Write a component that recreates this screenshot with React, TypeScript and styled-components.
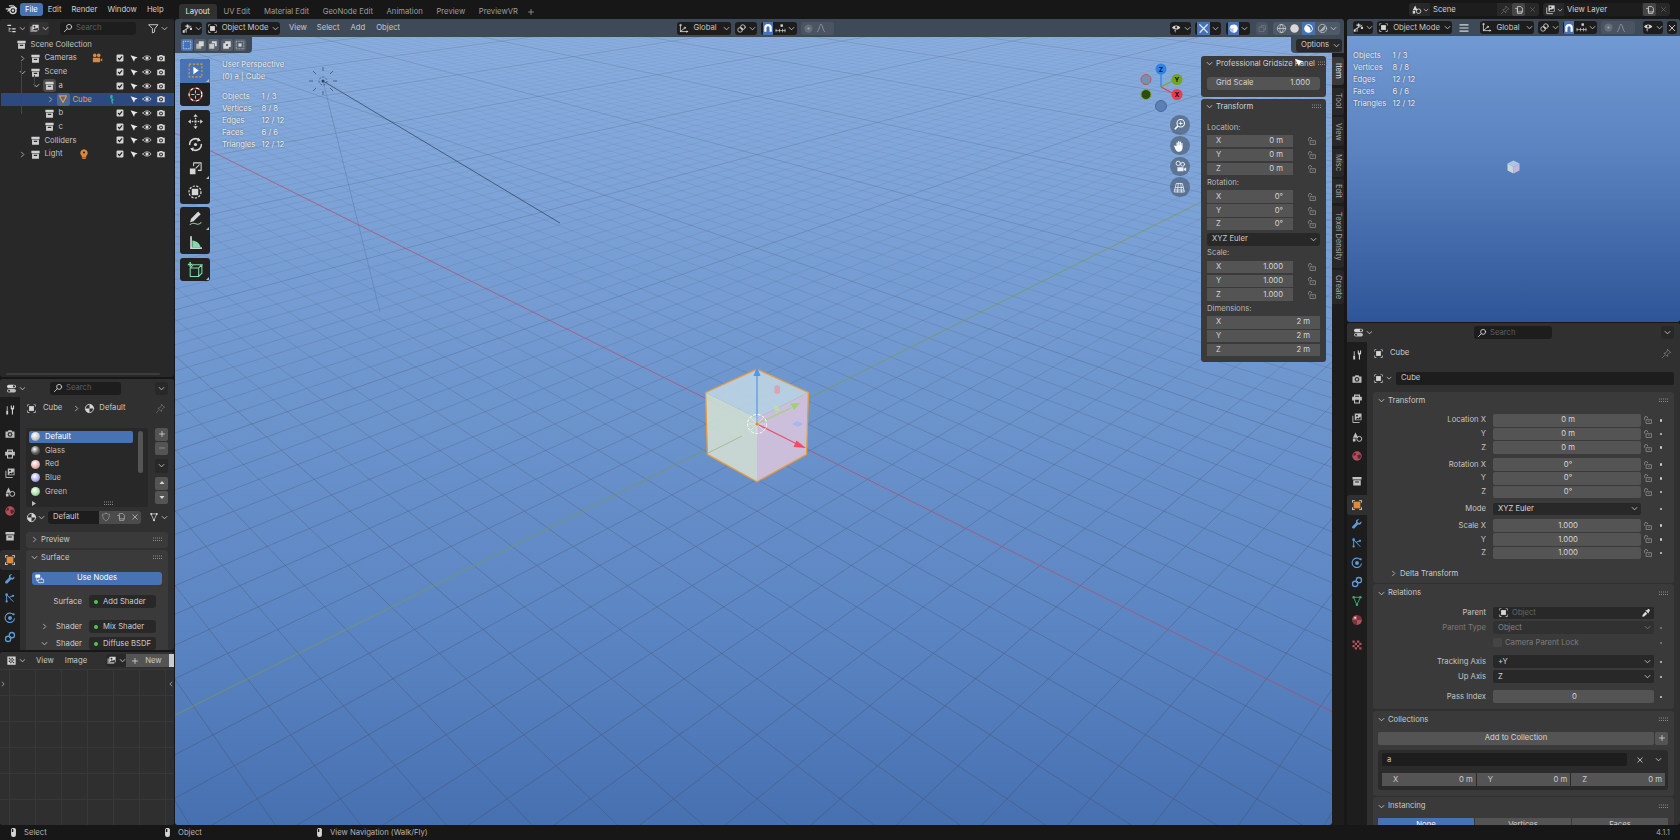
import React, { useMemo } from 'react';
import styled, { createGlobalStyle } from 'styled-components';

const GlobalStyle = createGlobalStyle`
  html, body { margin: 0; padding: 0; background: #181818; }
  body {
    font-family: Inter, "Liberation Sans", sans-serif;
    font-size: 7.7px;
    line-height: 1;
    color: #cccccc;
    -webkit-font-smoothing: antialiased;
  }
  * { box-sizing: border-box; }
`;

/* ---------- icons ---------- */

const line = (children: React.ReactNode, w = 1.2) => (
  <g fill="none" stroke="currentColor" strokeWidth={w} strokeLinecap="round" strokeLinejoin="round">
    {children}
  </g>
);

const glyphs: Record<string, React.ReactNode> = {
  logo: (
    <>
      {line(<circle cx="9.8" cy="9.3" r="3.8" />, 1.7)}
      <circle cx="9.8" cy="9.3" r="1.5" />
      {line(<path d="M1.5 7.2h4.5M3.5 10l3.5-3.2M5.5 3.5h5l3.6 3.2" />, 1.5)}
    </>
  ),
  box: <path fillRule="evenodd" d="M2 2.5h12V6H2zM3 7h10v7H3zM5.5 8.5V10h5V8.5z" />,
  check: (
    <>
      <rect x="2.5" y="2.5" width="11" height="11" rx="1.6" />
      <path d="M5 8l2.2 2.4L11.3 5.4" fill="none" stroke="#222" strokeWidth="1.9" />
    </>
  ),
  arrow: <path d="M2.5 3.5L14 7.2 9.6 9.2 8 14z" />,
  eye: (
    <>
      {line(<path d="M1.5 8c2.8-4.6 10.2-4.6 13 0-2.8 4.6-10.2 4.6-13 0z" />)}
      <circle cx="8" cy="8" r="2.5" />
    </>
  ),
  render: (
    <>
      <path d="M2 4.5h3L6 3h4l1 1.5h3V13H2z" />
      <circle cx="8" cy="8.6" r="3.2" fill="#333" />
      <circle cx="8" cy="8.6" r="1.5" />
    </>
  ),
  camera: (
    <>
      <circle cx="5" cy="4.5" r="2.4" />
      <circle cx="10.3" cy="4.5" r="2.4" />
      <path d="M2.5 7.5h9.5v6H2.5zM12.5 10l2.5-1.6v4.2L12.5 11z" />
    </>
  ),
  bulb: (
    <>
      <path d="M8 1.5a5 5 0 0 1 3 9v2H5v-2a5 5 0 0 1 3-9z" />
      <rect x="5.6" y="13" width="4.8" height="1.5" />
      <circle cx="8" cy="6" r="1.4" fill="#332211" />
    </>
  ),
  mesh: <>{line(<path d="M2.5 3h11L8 13.5z" />, 2)}</>,
  pose: <path d="M5 2l3 1.5L6.8 7 9 8.2 7.5 11l1 3-1.5.4L5.5 11l.5-3.5L4 6.8z" />,
  object: (
    <>
      <path d="M2 2h3v1H3v2H2zM11 2h3v3h-1V3h-2zM2 11h1v2h2v1H2zM13 11h1v3h-3v-1h2z" />
      <rect x="4.5" y="4.5" width="7" height="7" />
    </>
  ),
  material: (
    <>
      {line(<circle cx="8" cy="8" r="6" />, 1.3)}
      <path d="M8 2a6 6 0 0 1 6 6H8zM8 8H2a6 6 0 0 0 6 6z" />
    </>
  ),
  pin: line(<path d="M9.5 2l4.5 4.5-2 .8-2.6 2.6-.2 2.6-5-5 2.6-.2L9.3 4zM5 11l-3 3" />, 1),
  search: line(<><circle cx="9.8" cy="6.2" r="4" /><path d="M6.8 9.2L2.2 13.8" /></>, 1.4),
  filter: line(<path d="M1.5 2.5h13L9.6 8.6V13l-3.2 1.4V8.6z" />, 1.3),
  outliner: <path d="M2 2.5h5.5v2H2zM4 6.5h1v5h3v1H4zM5 8h3v1H5zM9 7.7h5v1.6H9zM9 11.7h5v1.6H9z" />,
  display: (
    <>
      <rect x="2" y="5" width="10" height="8" opacity=".55" />
      <path d="M5 2.5h9v8H5z" />
      <circle cx="8" cy="5.5" r="1.4" fill="#333" />
      <path d="M6 9.5l2.5-2 1.5 1 2-1.5 1 1v2H6z" fill="#333" />
    </>
  ),
  editor: (
    <>
      <rect x="1.5" y="2.5" width="13" height="5" rx="2.5" />
      <rect x="1.5" y="8.8" width="13" height="5" rx="2.5" opacity=".85" />
      <circle cx="11.5" cy="5" r="1.6" fill="#333" />
      <circle cx="4.5" cy="11.3" r="1.6" fill="#333" />
    </>
  ),
  view3d: (
    <>
      {line(<path d="M6 9v4.5M6 9L2 11.5M6 9l7-4" />, 1.2)}
      <path d="M5 3.5h2V2h2v1.5h2v2H9V7H7V5.5H5zM11.5 7h3v3h-3zM1 11h3v3H1z" />
    </>
  ),
  imageEd: (
    <path d="M2 2h12v12H2zM4 4v2h2V4zM8 4v2h2V4zM6 6v2h2V6zM10 6v2h2V6zM4 8v2h2V8zM8 8v2h2V8zM6 10v2h2v-2zM10 10v2h2v-2z" fillRule="evenodd" />
  ),
  menu: <path d="M2 3h12v1.6H2zM2 7.2h12v1.6H2zM2 11.4h12V13H2z" />,
  global: line(<><path d="M3.5 12.5h9M3.5 12.5V3.5M3.5 12.5L9.5 7.5" /><circle cx="3.5" cy="3" r="1" /><circle cx="13" cy="12.5" r="1" /><circle cx="10" cy="7" r="1" /></>),
  link: line(<><circle cx="6" cy="10" r="3.4" /><circle cx="10" cy="6" r="3.4" /><circle cx="8" cy="8" r=".8" /></>, 1.2),
  magnet: <path d="M2 7.5a6 6 0 0 1 12 0V14h-3.5V7.5a2.5 2.5 0 0 0-5 0V14H2z" />,
  snapInc: (
    <>
      {line(<path d="M1.5 11h13M1.5 9v4M6.5 9v4M11 9v4M14.5 9v4" />, 1)}
      <rect x="8" y="2" width="3.5" height="3.5" />
    </>
  ),
  prop: (
    <>
      <circle cx="8" cy="8" r="6" opacity=".3" />
      <circle cx="8" cy="8" r="1.6" />
    </>
  ),
  curve: line(<path d="M2 14C5 14 5.5 2 8 2s3 12 6 12" />, 1.1),
  viewEye: (
    <>
      <path d="M1.5 6.5C4 2.5 11 2.5 13.5 6.5 11 10.5 4 10.5 1.5 6.5z" />
      <circle cx="7.5" cy="6.5" r="1.6" fill="#222" />
      <path d="M5 10h2l-1 4.5z" />
    </>
  ),
  gizmoOv: line(<path d="M2.5 2.5L8 8m5.5-5.5L8 8M8 8l-5 5.5M8 8l5.5 5.5" />, 1.8),
  overlay: (
    <>
      <circle cx="8" cy="8" r="6" opacity=".6" />
      <path d="M8 2a6 6 0 0 1 0 12z" />
      <circle cx="6" cy="5.5" r="2.6" />
    </>
  ),
  xray: line(<><rect x="2.5" y="5.5" width="8" height="8" /><path d="M5.5 5.5V2.5h8v8h-3" /></>, 1),
  shadeWire: line(<><circle cx="8" cy="8" r="6" /><path d="M2 8h12M8 2c-3.5 3-3.5 9 0 12M8 2c3.5 3 3.5 9 0 12" /></>, 1),
  shadeSolid: <circle cx="8" cy="8" r="6.2" />,
  shadeMat: (
    <>
      <circle cx="8" cy="8" r="6.2" />
      <path d="M5 4a5 5 0 0 1 5.5 8.5A6 6 0 0 0 5 4z" fill="#4772b3" />
    </>
  ),
  shadeRender: (
    <>
      {line(<circle cx="8" cy="8" r="6" />, 1)}
      <path d="M11.5 3.5A6 6 0 0 1 3.5 11.5z" opacity=".7" />
    </>
  ),
  selSet: (
    <g fill="none" stroke="currentColor" strokeWidth="1.1" strokeDasharray="1.6 1.1">
      <rect x="2" y="2" width="12" height="12" />
    </g>
  ),
  selExt: (
    <>
      <path d="M6 2h8v8H6z" />
      <path d="M2 6h8v8H2z" opacity=".75" />
    </>
  ),
  selSub: (
    <>
      <path d="M2 6h8v8H2z" opacity=".9" />
      <path d="M6 2h8v8h-3V5H6z" />
    </>
  ),
  selDiff: <path fillRule="evenodd" d="M5 2h9v9h-3v3H2V5h3zM6.5 6.5v3h3v-3z" />,
  selInt: (
    <>
      <g fill="none" stroke="currentColor" strokeWidth="1" strokeDasharray="1.5 1">
        <rect x="2" y="2" width="12" height="12" />
      </g>
      <rect x="5.5" y="5.5" width="5" height="5" />
    </>
  ),
  toolSelect: (
    <>
      <rect x="2" y="2" width="12" height="12" fill="none" stroke="#e0a03c" strokeWidth="1" strokeDasharray="2 1.5" />
      <path d="M6 4.5l5 3.5-5 3.5z" fill="#fff" />
    </>
  ),
  toolCursor: (
    <>
      <circle cx="8" cy="8" r="6" fill="none" stroke="#fff" strokeWidth="1.2" strokeDasharray="3 2.6" />
      <circle cx="8" cy="8" r="6" fill="none" stroke="#d23c3c" strokeWidth="1.2" strokeDasharray="3 2.6" strokeDashoffset="2.8" />
      <path d="M8 4v3M8 9v3M4 8h3M9 8h3" stroke="#ddd" strokeWidth=".8" />
    </>
  ),
  toolMove: (
    <>
      <path d="M8 1l2 2.6H6zM8 15l-2-2.6h4zM1 8l2.6-2v4zM15 8l-2.6 2V6z" />
      <rect x="7" y="7" width="2" height="2" />
      <rect x="7.4" y="4.5" width="1.2" height="1.4" />
      <rect x="7.4" y="10.1" width="1.2" height="1.4" />
      <rect x="4.5" y="7.4" width="1.4" height="1.2" />
      <rect x="10.1" y="7.4" width="1.4" height="1.2" />
    </>
  ),
  toolRotate: (
    <>
      {line(<path d="M2.5 8a5.5 5.5 0 0 1 9-4.2M13.5 8a5.5 5.5 0 0 1-9 4.2" />, 1.4)}
      <circle cx="8" cy="8" r="1.5" />
      <path d="M10.5 1.5l2.5 3-3.5.6zM5.5 14.5l-2.5-3 3.5-.6z" />
    </>
  ),
  toolScale: (
    <>
      <path d="M2 8h6v6H2z" />
      {line(<path d="M6 2h8v8M6 2v3M14 10h-3M8.5 7.5L12 4" />, 1.1)}
    </>
  ),
  toolXform: (
    <>
      <circle cx="8" cy="8" r="6" fill="none" stroke="currentColor" strokeWidth="1.2" strokeDasharray="2.2 1.4" />
      <rect x="4.8" y="4.8" width="6.4" height="6.4" />
    </>
  ),
  toolAnnotate: (
    <>
      <path d="M10.5 1.5l2.4 2.4-6.8 6.6-3.2 1 .9-3.3z" />
      <path d="M2.5 14c3-2.5 4.5-1.5 6.5-.8s3.5-.4 4.5-1.6" fill="none" stroke="#6fcb9f" strokeWidth="1" />
    </>
  ),
  toolMeasure: (
    <>
      <path d="M3 2h1.6v10.5H14V14H3z" />
      <path d="M5 6c4 .3 7 2.8 7.8 6.5H5z" fill="#7fdca8" />
    </>
  ),
  toolAdd: (
    <g fill="none" stroke="#7fdca8" strokeWidth="1">
      <path d="M3 6.5h8v8H3zM3 6.5l3-3h8l-3 3M14 3.5v8l-3 3" />
      <path d="M3 1v4.4M.8 3.2h4.4" strokeWidth="1.4" />
    </g>
  ),
  zoom: (
    <>
      <circle cx="9.5" cy="6.5" r="4.6" fill="none" stroke="currentColor" strokeWidth="1.3" />
      <path d="M6 10l-3.8 3.8" stroke="currentColor" strokeWidth="2" />
      <path d="M9 4h1v2h2v1h-2v2H9V7H7V6h2z" />
    </>
  ),
  hand: (
    <path d="M4 8V4.5c0-1 1.4-1 1.4 0V7h.4V3c0-1 1.5-1 1.5 0v4h.4V3.5c0-1 1.4-1 1.4 0V7.5h.4V5c0-1 1.4-1 1.4 0v5c0 3-2 4.5-4 4.5-2.5 0-3-1-4.4-3.5L1.5 8.5c-.5-1 .7-1.6 1.3-.8z" />
  ),
  navCam: (
    <>
      {line(<><circle cx="6" cy="5" r="2.5" /><circle cx="11" cy="6" r="2.2" /></>, 1.1)}
      <path d="M5 9.5h7V14H5zM12.5 11l2.5-1.5V14l-2.5-1.3z" />
    </>
  ),
  navGrid: line(<path d="M4.5 3h7l2.5 10.500H2zM3.3 8h9.4M2.5 11h11M6.5 3L5.500 13.500M9.500 3l1 10.500" />, 1),
  lock: line(<><path d="M2.5 7V4.8a2.5 2.5 0 0 1 5 0" /><rect x="5.5" y="7.5" width="8" height="6" /><path d="M9 10h1" /></>, .9),
  shield: line(<path d="M8 2c2 1.2 3.5 1.5 5.5 1.5 0 5-1.5 8.5-5.5 11-4-2.5-5.500-6-5.500-11C4.500 3.500 6 3.200 8 2z" />, 1.2),
  copy: line(<><path d="M2.5 5.5h3v8h7v-3" /><path d="M6 2.5h5l2.5 2.5v6H6z" /></>, 1.2),
  cross: line(<path d="M3.5 3.5l9 9M12.5 3.5l-9 9" />, 1.6),
  plus: line(<path d="M8 3v10M3 8h10" />, 1.6),
  minus: line(<path d="M3 8h10" />, 1.6),
  up: <path d="M8 4l5 6H3z" />,
  down: <path d="M8 12L3 6h10z" />,
  dataEd: (
    <>
      {line(<path d="M4 3h8.5L8 13z" />, 1.2)}
      <circle cx="3.5" cy="3" r="1.6" />
      <circle cx="12.5" cy="3" r="1.6" />
      <circle cx="8" cy="13" r="1.6" />
    </>
  ),
  nodes: (
    <>
      <rect x="2" y="2" width="7" height="5" rx="1" />
      <rect x="6" y="9" width="8" height="5" rx="1" fill="none" stroke="currentColor" />
      {line(<path d="M11 7v2M4 7v4h2" />, 1)}
    </>
  ),
  tool: (
    <>
      <path d="M3 8.5h2.5V14H3zM3.7 3h1.1v5H3.7z" />
      <path d="M9 2v3.5c0 1 .7 1.8 1.5 2V14H12V7.5c.8-.2 1.5-1 1.5-2V2H12v3h-1.5V2z" />
    </>
  ),
  output: <path fillRule="evenodd" d="M4 2h8v3h2.5v5H12v4H4v-4H1.5V5H4zM5.5 3.5V5h5V3.5zM5.5 9v3.5h5V9z" />,
  viewLayer: (
    <>
      <path d="M5 2h9v9H5z" />
      <path d="M2.5 5v9h9" fill="none" stroke="currentColor" strokeWidth="1.2" />
      <circle cx="8" cy="5" r="1.2" fill="#1d1d1d" />
      <path d="M6 10l2.5-2.500 1.500 1 2.500-2.500.5 4z" fill="#1d1d1d" />
    </>
  ),
  scene: (
    <>
      <path d="M6 2l3.5 7H2.5z" />
      <circle cx="11" cy="10.5" r="3.3" fill="none" stroke="currentColor" strokeWidth="1.3" />
      <path d="M6 10H2.5v4H6z" />
    </>
  ),
  world: (
    <>
      <circle cx="8" cy="8" r="6.3" />
      <path d="M4 3.5l3 1-1 2.5-3 .5zM8.5 6.5l4-.5 1 3-2.5 3-2-1z" fill="#1d1d1d" opacity=".7" />
    </>
  ),
  objTab: (
    <>
      <path d="M1.5 1.5H5v1H2.5V5h-1zM11 1.5h3.5V5h-1V2.5H11zM1.5 11h1v2.500H5v1H1.500zM13.500 11h1v3.500H11v-1h2.500z" fill="#e8e8e8" />
      <rect x="3.5" y="3.5" width="9" height="9" />
    </>
  ),
  modifier: (
    <path d="M13.5 4.5l-2.4 2.2-2-.6-.6-2L11 1.8C9.2 1 7 2 6.6 4c-.2.8 0 1.500.2 2.100L2 10.900c-.8.8-.8 1.900 0 2.700.8.8 2 .7 2.700 0l4.700-4.800c2.200.8 4.400-.7 4.600-3 0-.5 0-.9-.5-1.300z" />
  ),
  particles: (
    <>
      <circle cx="3.5" cy="3.5" r="1.8" />
      <circle cx="12" cy="5" r="1.5" />
      <circle cx="3.5" cy="12.5" r="1.5" />
      {line(<path d="M3.5 3.5L12 12.5M3.5 3.5v9M7 7l5-2" />, 1.3)}
    </>
  ),
  physics: (
    <>
      {line(<path d="M12.5 3.5A6.3 6.3 0 1 0 14 9" />, 1.5)}
      <circle cx="8" cy="8" r="2.6" />
      <circle cx="13" cy="3" r="1.3" />
    </>
  ),
  constraint: (
    <>
      {line(<><circle cx="5.5" cy="10.5" r="3.5" /><circle cx="10.5" cy="5.5" r="3.5" /></>, 1.7)}
      <circle cx="8" cy="8" r="1.3" />
    </>
  ),
  matTab: (
    <>
      <circle cx="8" cy="8" r="6.5" />
      <path d="M8 1.5A6.5 6.5 0 0 1 14.5 8H8zM8 8H1.5A6.5 6.5 0 0 0 8 14.5z" fill="#1d1d1d" opacity=".45" />
      <circle cx="5.5" cy="5" r="1.5" fill="#f1c6c6" />
    </>
  ),
  texture: (
    <path fillRule="evenodd" d="M2 2h12v12H2zM5 2v3H2v3h3v3H2v3h3v-3h3v3h3v-3h3V8h-3V5h3V2h-3v3H8V2zM5 5v3h3V5zM8 8v3h3V8z" />
  ),
  mouse: (
    <path fillRule="evenodd" d="M4.5 3.5a3 3 0 0 1 3-2h1a3 3 0 0 1 3 2v8a3 3 0 0 1-3 3h-1a3 3 0 0 1-3-3zM5.7 3.7v3.5h2V2.8c-1.2 0-2 .1-2 .9z" />
  ),
  eyedrop: (
    <>
      <path d="M10.5 2.5c1-1 2-1 3 0s1 2 0 3L12 6.700l1 1-1.200 1.200-4.800-4.800L8.300 3l1 1z" />
      <path d="M7 6L2.5 11 2 14l3-.5L10 9z" fill="#ddd" />
    </>
  ),
};

const Svg = styled.svg<{ $c?: string }>`
  flex-shrink: 0;
  display: block;
  fill: currentColor;
  color: ${(p) => p.$c || '#d6d6d6'};
`;

const Icon = ({ name, size = 11, color }: { name: string; size?: number; color?: string }) => (
  <Svg $c={color} width={size} height={size} viewBox="0 0 16 16">
    {glyphs[name]}
  </Svg>
);

const ChevD = ({ size = 7, color = '#c8c8c8' }: { size?: number; color?: string }) => (
  <Svg $c={color} width={size} height={size} viewBox="0 0 8 8">
    <path d="M1 2.5L4 5.5 7 2.5" fill="none" stroke="currentColor" strokeWidth="1" />
  </Svg>
);

const ChevR = ({ size = 7, color = '#b8b8b8' }: { size?: number; color?: string }) => (
  <Svg $c={color} width={size} height={size} viewBox="0 0 8 8">
    <path d="M2.5 1L5.5 4 2.5 7" fill="none" stroke="currentColor" strokeWidth="1" />
  </Svg>
);

const Grip = () => (
  <Svg $c="#8a8a8a" width="9" height="5" viewBox="0 0 9 5">
    {[0, 2, 4, 6, 8].map((x) => (
      <g key={x}>
        <rect x={x} y="0.5" width="1" height="1" />
        <rect x={x} y="3" width="1" height="1" />
      </g>
    ))}
  </Svg>
);

/* ---------- page frame ---------- */

const Screen = styled.div`
  width: 1680px;
  height: 840px;
  overflow: hidden;
  display: flex;
  flex-direction: column;
  background: #171717;
`;

const TopBar = styled.div`
  height: 19px;
  flex-shrink: 0;
  display: flex;
  align-items: center;
  padding-left: 5px;
  color: #d4d4d4;
`;

const MenuItem = styled.div<{ $active?: boolean; $ml?: number }>`
  height: 13px;
  margin-left: ${(p) => p.$ml || 0}px;
  padding: 0 5px;
  display: flex;
  align-items: center;
  border-radius: 3px;
  background: ${(p) => (p.$active ? '#4772b3' : 'transparent')};
  color: ${(p) => (p.$active ? '#fff' : '#cfcfcf')};
`;

const Tabs = styled.div`
  display: flex;
  align-self: flex-end;
  height: 15px;
  margin-left: 10px;
  align-items: stretch;
`;

const WsTab = styled.div<{ $active?: boolean }>`
  padding: 0 6.8px;
  display: flex;
  align-items: center;
  border-radius: 3px 3px 0 0;
  background: ${(p) => (p.$active ? '#303030' : 'transparent')};
  color: ${(p) => (p.$active ? '#e4e4e4' : '#9d9d9d')};
`;

const AddTab = styled(WsTab)`
  padding: 0 2px;
`;

const TopRight = styled.div`
  margin-left: auto;
  margin-right: 10px;
  display: flex;
  gap: 4px;
`;

const SceneBox = styled.div<{ $w: number }>`
  width: ${(p) => p.$w}px;
  height: 13px;
  display: flex;
  align-items: center;
  border-radius: 3px;
  background: #282828;
  padding-left: 2px;
  gap: 1px;
`;

const SceneName = styled.div`
  flex: 1;
  padding-left: 3px;
  align-self: stretch;
  display: flex;
  align-items: center;
  background: #1d1d1d;
`;

const SceneBtn = styled.div<{ $lit?: boolean }>`
  width: 13px;
  height: 13px;
  display: flex;
  align-items: center;
  justify-content: center;
  background: ${(p) => (p.$lit ? '#454545' : 'transparent')};
  border-radius: 2px;
`;

const Main = styled.div`
  flex: 1;
  min-height: 0;
  display: flex;
`;

const LeftColumn = styled.div`
  width: 174px;
  margin-right: 1px;
  flex-shrink: 0;
  display: flex;
  flex-direction: column;
  gap: 2px;
`;

const RightColumn = styled.div`
  width: 333px;
  margin-left: 3px;
  flex-shrink: 0;
  display: flex;
  flex-direction: column;
  gap: 1px;
`;

const Region = styled.div<{ $h?: number; $bg?: string }>`
  height: ${(p) => (p.$h ? `${p.$h}px` : 'auto')};
  flex: ${(p) => (p.$h ? '0 0 auto' : '1')};
  min-height: 0;
  position: relative;
  overflow: hidden;
  border-radius: 3px;
  display: flex;
  flex-direction: column;
  background: ${(p) => p.$bg || '#282828'};
`;

const HeaderBar = styled.div<{ $bg?: string; $h?: number }>`
  height: ${(p) => p.$h || 18}px;
  flex-shrink: 0;
  display: flex;
  align-items: center;
  gap: 4px;
  padding: 0 6px;
  background: ${(p) => p.$bg || '#303030'};
`;

const Pill = styled.div<{ $w?: number; $bg?: string; $ml?: number }>`
  height: 13px;
  width: ${(p) => (p.$w ? `${p.$w}px` : 'auto')};
  margin-left: ${(p) => p.$ml || 0}px;
  flex-shrink: 0;
  display: flex;
  align-items: center;
  justify-content: center;
  gap: 2px;
  padding: 0 2px;
  border-radius: 3px;
  overflow: hidden;
  background: ${(p) => p.$bg || '#1d1d1d'};
`;

const PillSeg = styled.div<{ $lit?: boolean; $w?: number }>`
  align-self: stretch;
  width: ${(p) => (p.$w ? `${p.$w}px` : 'auto')};
  display: flex;
  align-items: center;
  justify-content: center;
  background: ${(p) => (p.$lit ? '#4772b3' : 'transparent')};
`;

const HeaderText = styled.div<{ $ml?: number }>`
  margin-left: ${(p) => p.$ml || 0}px;
  color: #c8c8c8;
  white-space: nowrap;
`;

const SearchBox = styled.div<{ $w: number; $ml?: number }>`
  width: ${(p) => p.$w}px;
  margin-left: ${(p) => p.$ml || 0}px;
  height: 13px;
  display: flex;
  align-items: center;
  gap: 3px;
  padding-left: 3px;
  border-radius: 3px;
  background: #1d1d1d;
  color: #5f5f5f;
`;

/* ---------- outliner ---------- */

const TreeList = styled.div`
  position: relative;
  flex: 1;
  padding-top: 0.8px;
`;

const TreeGuide = styled.div<{ $x: number; $top: number; $h: number }>`
  position: absolute;
  left: ${(p) => p.$x}px;
  top: ${(p) => p.$top}px;
  height: ${(p) => p.$h}px;
  width: 1px;
  background: #444;
`;

const TreeRow = styled.div<{ $depth: number; $active?: boolean }>`
  height: 13.7px;
  display: flex;
  align-items: center;
  margin-left: 1px;
  padding-left: ${(p) => 14.5 + p.$depth * 14}px;
  padding-right: 6.5px;
  background: ${(p) => (p.$active ? '#2c4a80' : 'transparent')};
  color: ${(p) => (p.$active ? '#e8a04a' : '#c2c2c2')};
`;

const Twisty = styled.div`
  width: 13px;
  flex-shrink: 0;
  display: flex;
  justify-content: center;
`;

const TreeIcon = styled.div<{ $lit?: boolean }>`
  width: 13px;
  height: 13px;
  margin-right: 3px;
  flex-shrink: 0;
  display: flex;
  align-items: center;
  justify-content: center;
  border-radius: 3px;
  background: ${(p) => (p.$lit ? 'rgba(255,255,255,.16)' : 'transparent')};
`;

const Extra = styled.div<{ $ml: number }>`
  margin-left: ${(p) => p.$ml}px;
  width: 0;
`;

const Restrict = styled.div`
  margin-left: auto;
  flex-shrink: 0;
  display: flex;
`;

const RestrictSlot = styled.div`
  width: 13.6px;
  display: flex;
  justify-content: center;
`;

const HScroll = styled.div`
  height: 2px;
  margin: 0 14px 2px 6px;
  background: #3c3c3c;
  border-radius: 1px;
`;

type TreeItem = {
  label: string;
  depth: number;
  twist?: 'r' | 'd';
  lit?: boolean;
  active?: boolean;
  icon?: string;
  extra?: { name: string; color: string; ml: number };
  noCheck?: boolean;
  none?: boolean;
};

const tree: TreeItem[] = [
  { label: 'Scene Collection', depth: -1, none: true },
  { label: 'Cameras', depth: 0, twist: 'r', extra: { name: 'camera', color: '#d9893f', ml: 14 } },
  { label: 'Scene', depth: 0, twist: 'd' },
  { label: 'a', depth: 1, twist: 'd', lit: true },
  {
    label: 'Cube',
    depth: 2,
    twist: 'r',
    lit: true,
    active: true,
    icon: 'mesh',
    noCheck: true,
    extra: { name: 'pose', color: '#2fb3a0', ml: 15 },
  },
  { label: 'b', depth: 1 },
  { label: 'c', depth: 1 },
  { label: 'Colliders', depth: 0 },
  { label: 'Light', depth: 0, twist: 'r', extra: { name: 'bulb', color: '#d9893f', ml: 16 } },
];

const Outliner = () => (
  <Region $h={358} $bg="#282828">
    <HeaderBar $bg="#282828">
      <Pill $w={19} $bg="transparent">
        <Icon name="outliner" />
        <ChevD />
      </Pill>
      <Pill $w={20} $bg="#333">
        <Icon name="display" />
        <ChevD />
      </Pill>
      <SearchBox $w={80} $ml={7}>
        <Icon name="search" size={10} />
        Search
      </SearchBox>
      <Pill $w={21} $ml={7} $bg="transparent">
        <Icon name="filter" />
        <ChevD />
      </Pill>
    </HeaderBar>
    <TreeList>
      <TreeGuide $x={21} $top={25} $h={52} />
      <TreeGuide $x={34} $top={38} $h={12} />
      {tree.map((t) => (
        <TreeRow key={t.label} $depth={t.depth} $active={t.active}>
          <Twisty>
            {t.twist === 'r' && <ChevR />}
            {t.twist === 'd' && <ChevD />}
          </Twisty>
          <TreeIcon $lit={t.lit}>
            <Icon name={t.icon || 'box'} size={t.icon ? 10 : 11} color={t.icon ? '#e8983e' : '#d0d0d0'} />
          </TreeIcon>
          {t.label}
          {t.extra && (
            <Extra $ml={t.extra.ml}>
              <Icon name={t.extra.name} size={12} color={t.extra.color} />
            </Extra>
          )}
          {!t.none && (
            <Restrict>
              <RestrictSlot>{!t.noCheck && <Icon name="check" size={10} />}</RestrictSlot>
              <RestrictSlot>
                <Icon name="arrow" size={10} color="#e8e8e8" />
              </RestrictSlot>
              <RestrictSlot>
                <Icon name="eye" size={10} color="#e0e0e0" />
              </RestrictSlot>
              <RestrictSlot>
                <Icon name="render" size={10} color="#d8d8d8" />
              </RestrictSlot>
            </Restrict>
          )}
        </TreeRow>
      ))}
    </TreeList>
    <HScroll />
  </Region>
);

/* ---------- property tabs ---------- */

const PropBody = styled.div`
  flex: 1;
  min-height: 0;
  display: flex;
`;

const TabStrip = styled.div`
  width: 20px;
  flex-shrink: 0;
  padding-top: 3.5px;
  background: #1d1d1d;
  display: flex;
  flex-direction: column;
  align-items: stretch;
`;

const PropTab = styled.div<{ $lit?: boolean; $gap?: boolean }>`
  height: 19.25px;
  flex-shrink: 0;
  margin-top: ${(p) => (p.$gap ? 5 : 0)}px;
  display: flex;
  align-items: center;
  justify-content: center;
  border-radius: 3px 0 0 3px;
  background: ${(p) => (p.$lit ? '#303030' : 'transparent')};
`;

const propTabs: { name: string; color: string; gap?: boolean; lit?: boolean }[] = [
  { name: 'tool', color: '#d0d0d0' },
  { name: 'render', color: '#bdbdbd', gap: true },
  { name: 'output', color: '#c0c0c0' },
  { name: 'viewLayer', color: '#c0c0c0' },
  { name: 'scene', color: '#c0c0c0' },
  { name: 'world', color: '#b54a58' },
  { name: 'box', color: '#c4c4c4', gap: true },
  { name: 'objTab', color: '#e08a3c', gap: true, lit: true },
  { name: 'modifier', color: '#5d9ad6' },
  { name: 'particles', color: '#5d9ad6' },
  { name: 'physics', color: '#5d9ad6' },
  { name: 'constraint', color: '#5d9ad6' },
  { name: 'dataEd', color: '#35b07a' },
  { name: 'matTab', color: '#b5505c' },
  { name: 'texture', color: '#b5505c', gap: true },
];

const PropertyTabs = () => (
  <TabStrip>
    {propTabs.map((t) => (
      <PropTab key={t.name} $lit={t.lit} $gap={t.gap}>
        <Icon name={t.name} size={12} color={t.color} />
      </PropTab>
    ))}
  </TabStrip>
);

/* ---------- material properties (left) ---------- */

const PropScroll = styled.div`
  flex: 1;
  min-width: 0;
  overflow: hidden;
  display: flex;
  flex-direction: column;
`;

const Crumbs = styled.div<{ $pl: number; $h: number; $mb: number }>`
  height: ${(p) => p.$h}px;
  margin-bottom: ${(p) => p.$mb}px;
  flex-shrink: 0;
  padding-left: ${(p) => p.$pl}px;
  padding-right: 8px;
  display: flex;
  align-items: center;
  gap: 3px;
`;

const CrumbEnd = styled.div`
  margin-left: auto;
`;

const SlotArea = styled.div`
  display: flex;
  margin: 0 6px 0 6px;
  gap: 7px;
`;

const SlotList = styled.div`
  width: 122px;
  height: 79px;
  padding: 3px;
  border-radius: 3px;
  background: #282828;
  display: grid;
  grid-template-columns: 1fr 9px;
  column-gap: 3px;
`;

const SlotRows = styled.div`
  display: flex;
  flex-direction: column;
`;

const SlotRow = styled.div<{ $lit?: boolean }>`
  height: 12.5px;
  margin-bottom: 1.2px;
  padding-left: 2px;
  display: flex;
  align-items: center;
  gap: 5px;
  border-radius: 2px;
  background: ${(p) => (p.$lit ? '#4772b3' : 'transparent')};
  color: ${(p) => (p.$lit ? '#fff' : '#bdbdbd')};
`;

const Ball = styled.div<{ $c: string }>`
  width: 9px;
  height: 9px;
  border-radius: 50%;
  background: radial-gradient(circle at 40% 35%, #fff 0%, ${(p) => p.$c} 55%, #333 130%);
`;

const SlotFoot = styled.div`
  display: flex;
  align-items: center;
  justify-content: space-between;
  padding: 2px 20px 0 3px;
  color: #bbb;
`;

const ScrollThumb = styled.div`
  height: 42px;
  width: 5px;
  margin-left: 2px;
  border-radius: 3px;
  background: #555;
`;

const SideBtns = styled.div`
  width: 13px;
  display: flex;
  flex-direction: column;
`;

const SideBtn = styled.div<{ $mt?: number; $bg?: string; $h?: number }>`
  height: ${(p) => p.$h || 13.5}px;
  margin-top: ${(p) => p.$mt || 0}px;
  display: flex;
  align-items: center;
  justify-content: center;
  background: ${(p) => p.$bg || '#545454'};
  border-radius: 2px;
`;

const MatRow = styled.div`
  height: 14px;
  margin: 4px 6px 0 6px;
  display: flex;
  align-items: center;
`;

const MatIcon = styled.div`
  width: 22px;
  display: flex;
  align-items: center;
  gap: 1px;
`;

const MatName = styled.div`
  width: 51px;
  height: 13px;
  padding-left: 5px;
  display: flex;
  align-items: center;
  background: #1d1d1d;
  border-radius: 3px 0 0 3px;
`;

const MatBtns = styled.div`
  width: 42px;
  height: 13px;
  display: flex;
  justify-content: space-around;
  align-items: center;
  background: #4b4b4b;
  border-radius: 0 3px 3px 0;
`;

const Panel = styled.div<{ $h?: number; $mx?: number; $mt?: number }>`
  height: ${(p) => (p.$h ? `${p.$h}px` : 'auto')};
  margin: ${(p) => p.$mt || 0}px ${(p) => p.$mx ?? 6}px 0;
  flex-shrink: 0;
  overflow: hidden;
  border-radius: 3px;
  background: #3a3a3a;
`;

const PanelHead = styled.div<{ $h?: number }>`
  height: ${(p) => p.$h || 16}px;
  display: flex;
  align-items: center;
  gap: 3px;
  padding: 0 6px 0 5px;
  color: #c8c8c8;
`;

const PanelGrip = styled.div`
  margin-left: auto;
`;

const BlueBtn = styled.div`
  height: 13px;
  margin: 6px 6px 0;
  position: relative;
  display: flex;
  align-items: center;
  justify-content: center;
  border-radius: 3px;
  color: #fff;
  background: #4772b3;
`;

const BtnLead = styled.div`
  position: absolute;
  left: 2px;
`;

const ShaderRow = styled.div<{ $mt: number }>`
  margin-top: ${(p) => p.$mt}px;
  display: flex;
  align-items: center;
  height: 12px;
  padding-left: 6px;
`;

const ShaderLabel = styled.div`
  width: 50px;
  display: flex;
  align-items: center;
  justify-content: flex-end;
  gap: 8px;
  white-space: nowrap;
`;

const ShaderField = styled.div`
  width: 67px;
  height: 12.5px;
  margin-left: 7px;
  padding-left: 5px;
  display: flex;
  align-items: center;
  gap: 5px;
  border-radius: 3px;
  background: #282828;
`;

const Socket = styled.div`
  width: 4px;
  height: 4px;
  border-radius: 50%;
  background: #4cc94c;
`;

const slots = [
  { name: 'Default', c: '#c8c8c8' },
  { name: 'Glass', c: '#5a5a5a' },
  { name: 'Red', c: '#e8b0b0' },
  { name: 'Blue', c: '#b0b0f0' },
  { name: 'Green', c: '#a8e0a8' },
];

const MaterialProps = () => (
  <Region $h={271} $bg="#303030">
    <HeaderBar>
      <Pill $w={19} $bg="transparent">
        <Icon name="editor" />
        <ChevD />
      </Pill>
      <SearchBox $w={78} $ml={21}>
        <Icon name="search" size={10} />
        Search
      </SearchBox>
      <Pill $w={13} $ml={30} $bg="#282828">
        <ChevD />
      </Pill>
    </HeaderBar>
    <PropBody>
      <PropertyTabs />
      <PropScroll>
        <Crumbs $pl={6} $h={22} $mb={8.5}>
          <Icon name="object" />
          <HeaderText $ml={3}>Cube</HeaderText>
          <HeaderText $ml={8}>
            <ChevR />
          </HeaderText>
          <HeaderText $ml={1}>
            <Icon name="material" />
          </HeaderText>
          <HeaderText $ml={1}>Default</HeaderText>
          <CrumbEnd>
            <Icon name="pin" color="#777" />
          </CrumbEnd>
        </Crumbs>
        <SlotArea>
          <SlotList>
            <SlotRows>
              {slots.map((s, i) => (
                <SlotRow key={s.name} $lit={i === 0}>
                  <Ball $c={s.c} />
                  {s.name}
                </SlotRow>
              ))}
              <SlotFoot>
                <Svg $c="#bbb" width="4" height="5" viewBox="0 0 4 5">
                  <path d="M0 0l4 2.5L0 5z" />
                </Svg>
                <Grip />
              </SlotFoot>
            </SlotRows>
            <ScrollThumb />
          </SlotList>
          <SideBtns>
            <SideBtn $mt={0}>
              <Icon name="plus" size={8} />
            </SideBtn>
            <SideBtn $mt={0.5}>
              <Icon name="minus" size={8} color="#999" />
            </SideBtn>
            <SideBtn $mt={4} $bg="#282828">
              <ChevD />
            </SideBtn>
            <SideBtn $mt={4}>
              <Icon name="up" size={8} />
            </SideBtn>
            <SideBtn $mt={0.5}>
              <Icon name="down" size={8} />
            </SideBtn>
          </SideBtns>
        </SlotArea>
        <MatRow>
          <MatIcon>
            <Icon name="material" />
            <ChevD />
          </MatIcon>
          <MatName>Default</MatName>
          <MatBtns>
            <Icon name="shield" size={10} color="#999" />
            <Icon name="copy" size={10} color="#aaa" />
            <Icon name="cross" size={8} color="#bbb" />
          </MatBtns>
          <Pill $w={20} $ml={7} $bg="transparent">
            <Icon name="dataEd" size={10} />
            <ChevD />
          </Pill>
        </MatRow>
        <Panel $mt={8} $h={16}>
          <PanelHead>
            <ChevR />
            Preview
            <PanelGrip>
              <Grip />
            </PanelGrip>
          </PanelHead>
        </Panel>
        <Panel $mt={2} $h={120}>
          <PanelHead>
            <ChevD />
            Surface
            <PanelGrip>
              <Grip />
            </PanelGrip>
          </PanelHead>
          <BlueBtn>
            <BtnLead>
              <Icon name="nodes" size={11} color="#fff" />
            </BtnLead>
            Use Nodes
          </BlueBtn>
          <ShaderRow $mt={11}>
            <ShaderLabel>Surface</ShaderLabel>
            <ShaderField>
              <Socket />
              Add Shader
            </ShaderField>
          </ShaderRow>
          <ShaderRow $mt={13}>
            <ShaderLabel>
              <ChevR />
              Shader
            </ShaderLabel>
            <ShaderField>
              <Socket />
              Mix Shader
            </ShaderField>
          </ShaderRow>
          <ShaderRow $mt={5}>
            <ShaderLabel>
              <ChevD />
              Shader
            </ShaderLabel>
            <ShaderField>
              <Socket />
              Diffuse BSDF
            </ShaderField>
          </ShaderRow>
        </Panel>
      </PropScroll>
    </PropBody>
  </Region>
);

/* ---------- image editor ---------- */

const ImageGrid = styled.div`
  flex: 1;
  position: relative;
  background-color: #2f2f2f;
  background-image: linear-gradient(#383838 1px, transparent 1px),
    linear-gradient(90deg, #383838 1px, transparent 1px);
  background-size: 26px 26px;
  background-position: 9px 0;
`;

const EdgeArrow = styled.div<{ $side: 'left' | 'right' }>`
  position: absolute;
  top: 12px;
  ${(p) => p.$side}: 0;
  transform: ${(p) => (p.$side === 'left' ? 'none' : 'scaleX(-1)')};
`;

const NewBtn = styled.div`
  margin-left: -4px;
  width: 43px;
  height: 13px;
  padding-left: 5px;
  display: flex;
  align-items: center;
  gap: 6px;
  background: #545454;
  flex-shrink: 0;
`;

const NewTail = styled.div`
  margin-left: -4px;
  width: 5px;
  height: 13px;
  flex-shrink: 0;
  background: #ccc;
`;

const ImageEditor = () => (
  <Region $bg="#2f2f2f">
    <HeaderBar $h={17}>
      <Pill $w={19} $bg="transparent">
        <Icon name="imageEd" />
        <ChevD />
      </Pill>
      <HeaderText $ml={7}>View</HeaderText>
      <HeaderText $ml={7}>Image</HeaderText>
      <Pill $w={20} $ml={15} $bg="#282828">
        <Icon name="display" />
        <ChevD />
      </Pill>
      <NewBtn>
        <Icon name="plus" size={8} />
        New
      </NewBtn>
      <NewTail />
    </HeaderBar>
    <ImageGrid>
      <EdgeArrow $side="left">
        <ChevR size={6} />
      </EdgeArrow>
      <EdgeArrow $side="right">
        <ChevR size={6} />
      </EdgeArrow>
    </ImageGrid>
  </Region>
);

/* ---------- 3d viewport ---------- */

type V3 = [number, number, number];

const F: V3 = [-Math.cos(Math.PI / 6) / Math.SQRT2, Math.cos(Math.PI / 6) / Math.SQRT2, -0.5];
const R: V3 = [Math.SQRT1_2, Math.SQRT1_2, 0];
const U: V3 = [-0.5 / Math.SQRT2, 0.5 / Math.SQRT2, Math.cos(Math.PI / 6)];
const focal = 1000;
const camDist = 28;
const center = [757, 424];
const dot = (a: V3, b: V3) => a[0] * b[0] + a[1] * b[1] + a[2] * b[2];
const depth = (p: V3) => dot(p, F) + camDist;

const project = (p: V3): [number, number] => {
  const z = depth(p);
  return [center[0] + (focal * dot(p, R)) / z, center[1] - (focal * dot(p, U)) / z];
};

const pts = (list: V3[]) =>
  list
    .map((p) => project(p))
    .map((q) => `${q[0].toFixed(1)},${q[1].toFixed(1)}`)
    .join(' ');

// clip a ground line against the near plane, then write it as a path segment
const seg = (a: V3, b: V3) => {
  const near = 2;
  const za = depth(a);
  const zb = depth(b);
  if (za < near && zb < near) return '';
  const cut = (p: V3, q: V3, zp: number, zq: number): V3 => {
    const t = (near - zp) / (zq - zp);
    return [p[0] + (q[0] - p[0]) * t, p[1] + (q[1] - p[1]) * t, 0];
  };
  const s = za < near ? cut(a, b, za, zb) : a;
  const e = zb < near ? cut(b, a, zb, za) : b;
  const ps = project(s);
  const pe = project(e);
  return `M${ps[0].toFixed(1)} ${ps[1].toFixed(1)}L${pe[0].toFixed(1)} ${pe[1].toFixed(1)}`;
};

const SceneArea = styled.div`
  width: 1169px;
  flex-shrink: 0;
  display: flex;
  flex-direction: column;
`;

const ViewHeader = styled(HeaderBar)`
  padding: 0 4px 0 6px;
  background: #3f4a59;
  border-radius: 3px 3px 0 0;
`;

const HeaderSpacer = styled.div<{ $w?: number }>`
  flex: ${(p) => (p.$w ? `0 0 ${p.$w}px` : '1')};
`;

const SceneBody = styled.div`
  flex: 1;
  min-height: 0;
  position: relative;
  display: flex;
  background: #1d1d1d;
`;

const Canvas = styled.div`
  position: relative;
  flex: 1;
  overflow: hidden;
  border-radius: 0 0 3px 3px;
  background: linear-gradient(#89aedf 0%, #5c86c3 74%, #4670b0 100%);
`;

const CanvasSvg = styled.svg`
  position: absolute;
  inset: 0;
  width: 100%;
  height: 100%;
`;

const ToolSettings = styled.div`
  position: absolute;
  left: 0;
  top: 0;
  width: 77px;
  height: 16px;
  padding: 0 6px;
  display: flex;
  align-items: center;
  gap: 1.5px;
  background: #3f4a59;
  border-radius: 0 0 4px 0;
`;

const SelMode = styled.div<{ $lit?: boolean }>`
  width: 12px;
  height: 12px;
  display: flex;
  align-items: center;
  justify-content: center;
  border-radius: 2px;
  background: ${(p) => (p.$lit ? '#4772b3' : '#545e6c')};
`;

const OptionsTab = styled.div`
  position: absolute;
  right: 0;
  top: 0;
  z-index: 2;
  width: 53px;
  height: 16px;
  padding: 0 2px 0 5px;
  display: flex;
  align-items: center;
  justify-content: space-between;
  background: #3f4a59;
  border-radius: 0 0 0 4px;
`;

const OptionsBtn = styled.div`
  display: flex;
  flex: 1;
  height: 13px;
  padding: 0 2px 0 5px;
  align-items: center;
  justify-content: space-between;
  border-radius: 3px;
  background: #282828;
`;

const Toolbar = styled.div`
  position: absolute;
  left: 5px;
  top: 22px;
  width: 30px;
  display: flex;
  flex-direction: column;
  gap: 3.5px;
`;

const ToolGroup = styled.div`
  display: flex;
  flex-direction: column;
  border-radius: 3px;
  overflow: hidden;
  background: #222;
`;

const ToolBtn = styled.div<{ $lit?: boolean }>`
  height: 23.5px;
  position: relative;
  display: flex;
  align-items: center;
  justify-content: center;
  background: ${(p) => (p.$lit ? '#4772b3' : 'transparent')};
`;

const ToolCorner = styled.div`
  position: absolute;
  right: 1px;
  bottom: 1px;
  width: 0;
  height: 0;
  border-left: 3px solid transparent;
  border-bottom: 3px solid #bbb;
`;

const Stats = styled.div<{ $left: number; $top: number }>`
  position: absolute;
  left: ${(p) => p.$left}px;
  top: ${(p) => p.$top}px;
  line-height: 12.05px;
  color: #ececec;
  text-shadow: 0 0 2px rgba(0, 0, 0, 0.45);
  white-space: nowrap;
`;

const StatGap = styled.div`
  height: 8px;
`;

const StatRow = styled.div`
  display: grid;
  grid-template-columns: 39.5px auto;
`;

const NavStack = styled.div`
  position: absolute;
  left: 995px;
  top: 78px;
  display: flex;
  flex-direction: column;
  gap: 1.3px;
`;

const NavBtn = styled.div`
  width: 19.5px;
  height: 19.5px;
  display: flex;
  align-items: center;
  justify-content: center;
  border-radius: 50%;
  background: rgba(70, 85, 105, 0.6);
`;

const GizmoSvg = styled.svg`
  position: absolute;
  left: 956px;
  top: 20px;
`;

const NPanels = styled.div`
  position: absolute;
  right: 6px;
  top: 18.5px;
  width: 125px;
  display: flex;
  flex-direction: column;
  gap: 2px;
`;

const NPanel = styled.div<{ $h: number }>`
  height: ${(p) => p.$h}px;
  padding: 0 6px;
  border-radius: 3px;
  background: #3a3a3a;
`;

const NHead = styled.div`
  height: 16px;
  margin: 0 -1px 5.5px;
  display: flex;
  align-items: center;
  gap: 3px;
  color: #cfcfcf;
  position: relative;
  white-space: nowrap;
`;

const CursorOver = styled.div`
  position: absolute;
  left: 87px;
  top: 0;
`;

const NLabel = styled.div`
  height: 14.9px;
  display: flex;
  align-items: center;
  color: #b8b8b8;
`;

const FieldStack = styled.div<{ $locked?: boolean }>`
  display: grid;
  grid-template-columns: ${(p) => (p.$locked ? '1fr 27px' : '1fr')};
  row-gap: 1px;
  height: 40.5px;
`;

const NField = styled.div`
  height: 12.5px;
  padding: 0 10px 0 9px;
  display: flex;
  align-items: center;
  justify-content: space-between;
  background: #545454;
  color: #d4d4d4;
`;

const LockSlot = styled.div`
  display: flex;
  justify-content: flex-end;
  padding-right: 3px;
  align-items: center;
`;

const NDrop = styled.div`
  height: 13px;
  margin-top: 2px;
  padding: 0 3px 0 5px;
  display: flex;
  align-items: center;
  justify-content: space-between;
  border-radius: 3px;
  background: #282828;
`;

const GridScale = styled(NField)`
  margin-top: 1px;
  border-radius: 3px;
`;

const SideTabs = styled.div`
  width: 12px;
  padding-top: 20px;
  flex-shrink: 0;
  display: flex;
  flex-direction: column;
  gap: 2.5px;
`;

const SideTab = styled.div<{ $h: number; $active?: boolean }>`
  height: ${(p) => p.$h}px;
  writing-mode: vertical-rl;
  display: flex;
  align-items: center;
  justify-content: center;
  border-radius: 0 3px 3px 0;
  background: ${(p) => (p.$active ? '#3a3a3a' : '#282828')};
  color: ${(p) => (p.$active ? '#e0e0e0' : '#a8a8a8')};
`;

const FieldRows = ({ rows, locked }: { rows: [string, string][]; locked?: boolean }) => (
  <FieldStack $locked={locked}>
    {rows.map(([k, v]) => (
      <React.Fragment key={k}>
        <NField>
          <span>{k}</span>
          <span>{v}</span>
        </NField>
        {locked && (
          <LockSlot>
            <Icon name="lock" size={10} color="#b0b0b0" />
          </LockSlot>
        )}
      </React.Fragment>
    ))}
  </FieldStack>
);

const sideTabs: [string, number][] = [
  ['Item', 28],
  ['Tool', 27],
  ['View', 29],
  ['Misc', 28],
  ['Edit', 24],
  ['Texel Density', 62],
  ['Create', 34],
];

const Viewport = () => {
  const grid = useMemo(() => {
    let minor = '';
    let major = '';
    const L = 110;
    for (let i = -L; i <= L; i++) {
      if (i === 0) continue;
      const d = seg([i, -L, 0], [i, L, 0]) + seg([-L, i, 0], [L, i, 0]);
      if (i % 10 === 0) major += d;
      else minor += d;
    }
    return {
      minor,
      major,
      red: seg([-L, 0, 0], [L, 0, 0]),
      green: seg([0, -L, 0], [0, L, 0]),
    };
  }, []);
  const o = project([0, 0, 0]);
  const cube = (x: number, y: number, z: number): V3 => [x, y, z];
  const top = [cube(-1, -1, 1), cube(1, -1, 1), cube(1, 1, 1), cube(-1, 1, 1)];
  const left = [cube(-1, -1, 1), cube(1, -1, 1), cube(1, -1, -1), cube(-1, -1, -1)];
  const right = [cube(1, -1, 1), cube(1, 1, 1), cube(1, 1, -1), cube(1, -1, -1)];
  const outline = [cube(-1, -1, 1), cube(-1, 1, 1), cube(1, 1, 1), cube(1, 1, -1), cube(1, -1, -1), cube(-1, -1, -1)];

  return (
    <SceneArea>
      <ViewHeader>
        <Pill $w={21}>
          <Icon name="view3d" />
          <ChevD />
        </Pill>
        <Pill $w={74}>
          <Icon name="object" />
          <HeaderText $ml={2}>Object Mode</HeaderText>
          <HeaderText $ml={2}>
            <ChevD />
          </HeaderText>
        </Pill>
        <HeaderText $ml={5}>View</HeaderText>
        <HeaderText $ml={6}>Select</HeaderText>
        <HeaderText $ml={7}>Add</HeaderText>
        <HeaderText $ml={7}>Object</HeaderText>
        <HeaderSpacer $w={273} />
        <Pill $w={54} $ml={-4}>
          <Icon name="global" />
          <HeaderText $ml={2}>Global</HeaderText>
          <HeaderText $ml={4}>
            <ChevD />
          </HeaderText>
        </Pill>
        <Pill $w={22}>
          <Icon name="link" />
          <ChevD />
        </Pill>
        <Pill $w={36}>
          <PillSeg $lit $w={12}>
            <Icon name="magnet" size={10} color="#fff" />
          </PillSeg>
          <Icon name="snapInc" size={11} />
          <ChevD />
        </Pill>
        <Pill $w={33} $bg="#4a5462">
          <Icon name="prop" size={11} color="#aaa" />
          <Icon name="curve" size={10} color="#aaa" />
          <HeaderSpacer />
        </Pill>
        <HeaderSpacer />
        <Pill $w={21}>
          <Icon name="viewEye" />
          <ChevD />
        </Pill>
        <Pill $w={26}>
          <PillSeg $lit $w={14}>
            <Icon name="gizmoOv" size={11} color="#dfe8f5" />
          </PillSeg>
          <ChevD />
        </Pill>
        <Pill $w={24} $ml={1}>
          <PillSeg $lit $w={12}>
            <Icon name="overlay" size={11} color="#fff" />
          </PillSeg>
          <ChevD />
        </Pill>
        <Pill $w={12} $ml={2} $bg="#4a5462">
          <Icon name="xray" size={9} color="#7d8794" />
        </Pill>
        <Pill $w={67} $ml={1} $bg="#4f5a69">
          <Icon name="shadeWire" size={11} />
          <Icon name="shadeSolid" size={11} color="#d8d8d8" />
          <PillSeg $lit $w={13}>
            <Icon name="shadeMat" size={11} color="#fff" />
          </PillSeg>
          <Icon name="shadeRender" size={11} />
          <ChevD />
        </Pill>
      </ViewHeader>
      <SceneBody>
        <OptionsTab>
          <OptionsBtn>
            Options
            <ChevD />
          </OptionsBtn>
        </OptionsTab>
        <Canvas>
          <CanvasSvg viewBox="175 37 1157 788" preserveAspectRatio="none">
            <defs>
              <linearGradient id="gridFade" gradientUnits="userSpaceOnUse" x1="0" y1="37" x2="0" y2="825">
                <stop offset="0" stopColor="#56688a" stopOpacity=".07" />
                <stop offset=".3" stopColor="#52648a" stopOpacity=".2" />
                <stop offset=".6" stopColor="#4c5d80" stopOpacity=".42" />
                <stop offset="1" stopColor="#48587a" stopOpacity=".62" />
              </linearGradient>
              <linearGradient id="gridMajor" gradientUnits="userSpaceOnUse" x1="0" y1="37" x2="0" y2="825">
                <stop offset="0" stopColor="#56688a" stopOpacity=".28" />
                <stop offset=".3" stopColor="#52648a" stopOpacity=".36" />
                <stop offset=".6" stopColor="#4c5d80" stopOpacity=".5" />
                <stop offset="1" stopColor="#48587a" stopOpacity=".65" />
              </linearGradient>
            </defs>
            <path d={grid.minor} fill="none" stroke="url(#gridFade)" strokeWidth="1" />
            <path d={grid.major} fill="none" stroke="url(#gridMajor)" strokeWidth="1" />
            <path d={grid.red} fill="none" stroke="#b84a60" strokeOpacity=".7" strokeWidth="1" />
            <path d={grid.green} fill="none" stroke="#7b9a4e" strokeOpacity=".7" strokeWidth="1" />
            {/* light and its helper lines */}
            <path d="M323 81L560 223" stroke="#32465f" strokeOpacity=".85" strokeWidth=".9" />
            <path d="M323 81L380 312" stroke="#4f6f9e" strokeOpacity=".55" strokeWidth=".7" />
            <g stroke="#3c5170" strokeWidth=".8" strokeDasharray="2 1.5" fill="none">
              <circle cx="323" cy="81" r="4" />
              <path d="M323 71v-4M323 91v4M313 81h-4M333 81h4M316 74l-3-3M330 88l3 3M316 88l-3 3M330 74l3-3" strokeDasharray="none" />
            </g>
            <circle cx="323" cy="81" r="1.5" fill="#2f4260" />
            {/* cube */}
            <polygon points={pts(top)} fill="#bcd3e3" fillOpacity=".92" />
            <polygon points={pts(left)} fill="#cfdcd3" fillOpacity=".92" />
            <polygon points={pts(right)} fill="#d4c2dc" fillOpacity=".92" />
            <path d={`M${o[0] - 49} ${o[1] + 29}L${o[0] - 15} ${o[1] + 12}`} stroke="#9fb08f" strokeWidth=".8" />
            <polygon points={pts(outline)} fill="none" stroke="#ea9a3c" strokeWidth="1.3" strokeLinejoin="round" />
            {/* move gizmo */}
            <path d="M757 424V376" stroke="#5a9bea" strokeWidth="1.3" />
            <path d="M757 367l-3.5 9h7z" fill="#4f96f0" />
            <path d="M757 424L791 408" stroke="#a4d07c" strokeWidth="1.2" />
            <path d="M800 403l-9.5 .5 3.5 6.5z" fill="#9bd46c" />
            <path d="M757 424L797 444" stroke="#e8566a" strokeWidth="1.2" />
            <path d="M806 448l-9.5 -7.5 -3 6.5z" fill="#ee4d63" />
            <path d="M777 385l3 1.5v6l-3 2-2.5 -2v-6z" fill="#e49aa8" fillOpacity=".8" />
            <path d="M774 405l4 1 2 4-3 2-3-3z" fill="#bde29a" fillOpacity=".8" />
            <path d="M797 421l6 3-5 3-6-3z" fill="#a7b8ee" />
            <circle cx="757" cy="424" r="9.5" fill="none" stroke="#fff" strokeWidth="1" strokeDasharray="3 1.5" />
            <path d="M757 416v16M749 424h16M751 418l12 12M751 430l12-12" stroke="#fff" strokeOpacity=".6" strokeWidth=".6" />
            <circle cx="757" cy="424" r="1.6" fill="#e8883a" />
          </CanvasSvg>

          <ToolSettings>
            <SelMode $lit>
              <Icon name="selSet" size={10} color="#fff" />
            </SelMode>
            <SelMode>
              <Icon name="selExt" size={10} />
            </SelMode>
            <SelMode>
              <Icon name="selSub" size={10} />
            </SelMode>
            <SelMode>
              <Icon name="selDiff" size={10} />
            </SelMode>
            <SelMode>
              <Icon name="selInt" size={10} />
            </SelMode>
          </ToolSettings>

          <Toolbar>
            <ToolGroup>
              <ToolBtn $lit>
                <Icon name="toolSelect" size={17} />
                <ToolCorner />
              </ToolBtn>
              <ToolBtn>
                <Icon name="toolCursor" size={17} />
              </ToolBtn>
            </ToolGroup>
            <ToolGroup>
              <ToolBtn>
                <Icon name="toolMove" size={17} />
              </ToolBtn>
              <ToolBtn>
                <Icon name="toolRotate" size={17} />
              </ToolBtn>
              <ToolBtn>
                <Icon name="toolScale" size={15} />
                <ToolCorner />
              </ToolBtn>
              <ToolBtn>
                <Icon name="toolXform" size={16} />
              </ToolBtn>
            </ToolGroup>
            <ToolGroup>
              <ToolBtn>
                <Icon name="toolAnnotate" size={17} />
                <ToolCorner />
              </ToolBtn>
              <ToolBtn>
                <Icon name="toolMeasure" size={17} />
              </ToolBtn>
            </ToolGroup>
            <ToolGroup>
              <ToolBtn>
                <Icon name="toolAdd" size={17} />
                <ToolCorner />
              </ToolBtn>
            </ToolGroup>
          </Toolbar>

          <Stats $left={47} $top={22}>
            <div>User Perspective</div>
            <div>(0) a | Cube</div>
            <StatGap />
            {[
              ['Objects', '1 / 3'],
              ['Vertices', '8 / 8'],
              ['Edges', '12 / 12'],
              ['Faces', '6 / 6'],
              ['Triangles', '12 / 12'],
            ].map(([k, v]) => (
              <StatRow key={k}>
                <span>{k}</span>
                <span>{v}</span>
              </StatRow>
            ))}
          </Stats>

          <GizmoSvg width="60" height="68" viewBox="0 0 60 68">
            <path d="M30 30V13" stroke="#2f83e3" strokeWidth="1.2" />
            <path d="M30 30L45 22" stroke="#79ad20" strokeWidth="1.2" />
            <path d="M30 30L45 38" stroke="#ee3a4f" strokeWidth="1.2" />
            <circle cx="30" cy="12" r="5.5" fill="#2f83e3" />
            <circle cx="46" cy="22.5" r="5.5" fill="#72a51f" />
            <circle cx="46" cy="37.5" r="5.5" fill="#ee3a4f" />
            <circle cx="15" cy="22.5" r="5" fill="#7a8fb0" stroke="#c45060" strokeWidth="1" />
            <circle cx="15" cy="37.5" r="5" fill="#2f4a10" stroke="#79ad20" strokeWidth="1" />
            <circle cx="30" cy="49" r="5.5" fill="#5d80b4" stroke="#3f6aa8" strokeWidth="1" />
            <g fontSize="6.5" fontWeight="700" fill="#111" textAnchor="middle" fontFamily="Inter, sans-serif">
              <text x="30" y="14.5">Z</text>
              <text x="46" y="25">Y</text>
              <text x="46" y="40">X</text>
            </g>
          </GizmoSvg>

          <NavStack>
            <NavBtn>
              <Icon name="zoom" size={13} color="#fff" />
            </NavBtn>
            <NavBtn>
              <Icon name="hand" size={14} color="#fff" />
            </NavBtn>
            <NavBtn>
              <Icon name="navCam" size={14} color="#eee" />
            </NavBtn>
            <NavBtn>
              <Icon name="navGrid" size={13} color="#eee" />
            </NavBtn>
          </NavStack>

          <NPanels>
            <NPanel $h={41}>
              <NHead>
                <ChevD />
                Professional Gridsize Panel
                <CursorOver>
                  <Icon name="arrow" size={12} color="#fff" />
                </CursorOver>
                <PanelGrip>
                  <Grip />
                </PanelGrip>
              </NHead>
              <GridScale>
                <span>Grid Scale</span>
                <span>1.000</span>
              </GridScale>
            </NPanel>
            <NPanel $h={263.5}>
              <NHead>
                <ChevD />
                Transform
                <PanelGrip>
                  <Grip />
                </PanelGrip>
              </NHead>
              <NLabel>Location:</NLabel>
              <FieldRows locked rows={[['X', '0 m'], ['Y', '0 m'], ['Z', '0 m']]} />
              <NLabel>Rotation:</NLabel>
              <FieldRows locked rows={[['X', '0°'], ['Y', '0°'], ['Z', '0°']]} />
              <NDrop>
                XYZ Euler
                <ChevD />
              </NDrop>
              <NLabel>Scale:</NLabel>
              <FieldRows locked rows={[['X', '1.000'], ['Y', '1.000'], ['Z', '1.000']]} />
              <NLabel>Dimensions:</NLabel>
              <FieldRows rows={[['X', '2 m'], ['Y', '2 m'], ['Z', '2 m']]} />
            </NPanel>
          </NPanels>
        </Canvas>
        <SideTabs>
          {sideTabs.map(([label, h], i) => (
            <SideTab key={label} $h={h} $active={i === 0}>
              {label}
            </SideTab>
          ))}
        </SideTabs>
      </SceneBody>
    </SceneArea>
  );
};

/* ---------- preview viewport (right) ---------- */

const PreviewCanvas = styled.div`
  position: relative;
  flex: 1;
  overflow: hidden;
  border-radius: 0 0 3px 3px;
  background: linear-gradient(#7199d2 0%, #5a83c0 40%, #2e5597 100%);
`;

const MiniCube = styled.svg`
  position: absolute;
  left: 160px;
  top: 124px;
`;

const Preview = () => (
  <Region $h={303} $bg="#3f4a59">
    <ViewHeader $h={17}>
      <Pill $w={20}>
        <Icon name="view3d" />
        <ChevD />
      </Pill>
      <Pill $w={75}>
        <Icon name="object" />
        <HeaderText $ml={2}>Object Mode</HeaderText>
        <HeaderText $ml={2}>
          <ChevD />
        </HeaderText>
      </Pill>
      <HeaderText $ml={2}>
        <Icon name="menu" size={12} />
      </HeaderText>
      <Pill $w={54} $ml={6}>
        <Icon name="global" />
        <HeaderText $ml={2}>Global</HeaderText>
        <HeaderText $ml={4}>
          <ChevD />
        </HeaderText>
      </Pill>
      <Pill $w={21}>
        <Icon name="link" />
        <ChevD />
      </Pill>
      <Pill $w={34}>
        <PillSeg $lit $w={12}>
          <Icon name="magnet" size={10} color="#fff" />
        </PillSeg>
        <Icon name="snapInc" size={11} />
        <ChevD />
      </Pill>
      <Pill $w={34} $bg="#4a5462">
        <Icon name="prop" size={11} color="#aaa" />
        <Icon name="curve" size={10} color="#aaa" />
        <HeaderSpacer />
      </Pill>
      <Pill $w={20} $ml={4}>
        <Icon name="viewEye" />
        <ChevD />
      </Pill>
      <Pill $w={10} $bg="#1d1d1d">
        <Icon name="gizmoOv" size={8} />
      </Pill>
    </ViewHeader>
    <PreviewCanvas>
      <Stats $left={6} $top={14}>
        {[
          ['Objects', '1 / 3'],
          ['Vertices', '8 / 8'],
          ['Edges', '12 / 12'],
          ['Faces', '6 / 6'],
          ['Triangles', '12 / 12'],
        ].map(([k, v]) => (
          <StatRow key={k}>
            <span>{k}</span>
            <span>{v}</span>
          </StatRow>
        ))}
      </Stats>
      <MiniCube width="13" height="14" viewBox="0 0 13 14">
        <path d="M6.5 0.5L12.5 3.5 6.5 7 .5 3.5z" fill="#a9c6e6" />
        <path d="M.5 3.5L6.5 7v6.5L.5 10.5z" fill="#c9d7d9" />
        <path d="M12.5 3.5L6.5 7v6.5l6-3z" fill="#c9b5dc" />
      </MiniCube>
    </PreviewCanvas>
  </Region>
);

/* ---------- object properties (right) ---------- */

const PanelStack = styled.div`
  display: flex;
  flex-direction: column;
  gap: 1.5px;
`;

const Group = styled.div<{ $gap?: number; $mb?: number }>`
  display: flex;
  flex-direction: column;
  gap: ${(p) => p.$gap ?? 1}px;
  margin-bottom: ${(p) => p.$mb ?? 4.2}px;
`;

const Row = styled.div<{ $dim?: boolean }>`
  height: 12.7px;
  display: flex;
  align-items: center;
  opacity: ${(p) => (p.$dim ? 0.45 : 1)};
`;

const Label = styled.div`
  width: 113px;
  margin-right: 7px;
  flex-shrink: 0;
  text-align: right;
  color: #c4c4c4;
`;

const Value = styled.div<{ $dark?: boolean }>`
  flex: 1;
  min-width: 0;
  align-self: stretch;
  padding: 0 3px 0 5px;
  display: flex;
  align-items: center;
  justify-content: ${(p) => (p.$dark ? 'space-between' : 'center')};
  background: ${(p) => (p.$dark ? '#282828' : '#545454')};
  border-radius: 2px;
  color: #d6d6d6;
`;

const Lock = styled.div`
  width: 13px;
  padding-left: 2px;
  flex-shrink: 0;
`;

const Deco = styled.div`
  width: 14px;
  flex-shrink: 0;
  display: flex;
  justify-content: center;
`;

const DecoDot = styled.div`
  width: 2.5px;
  height: 2.5px;
  border-radius: 50%;
  background: #d0d0d0;
`;

const PropRows = styled.div<{ $mt: number }>`
  margin: ${(p) => p.$mt}px 6px 0 0;
`;

const ObjName = styled.div`
  height: 14px;
  margin: 0 6px 7px 6px;
  display: flex;
  align-items: center;
  gap: 2px;
`;

const NameInput = styled.div`
  flex: 1;
  height: 12.5px;
  margin-left: 2px;
  padding-left: 5px;
  display: flex;
  align-items: center;
  background: #1d1d1d;
  border-radius: 2px;
`;

const CheckRow = styled.div`
  flex: 1;
  display: flex;
  align-items: center;
  gap: 3px;
  color: #c8c8c8;
`;

const MutedText = styled.span`
  color: #666;
`;

const CheckBox = styled.div`
  width: 9px;
  height: 9px;
  border-radius: 2px;
  background: #545454;
`;

const DeltaRow = styled.div`
  height: 14px;
  margin-top: 7.5px;
  padding-left: 17px;
  display: flex;
  align-items: center;
  gap: 3px;
`;

const AddRow = styled.div`
  height: 13px;
  margin: 3px 6px 0 5px;
  display: flex;
  gap: 1px;
`;

const AddBtn = styled.div<{ $w?: number }>`
  flex: ${(p) => (p.$w ? `0 0 ${p.$w}px` : '1')};
  display: flex;
  align-items: center;
  justify-content: center;
  border-radius: 2px;
  background: #545454;
  color: #d6d6d6;
`;

const CollBox = styled.div`
  margin: 5.5px 6px 0 5px;
  height: 40px;
  padding: 3px 3px 0 4px;
  border-radius: 3px;
  background: #2b2b2b;
  display: flex;
  flex-direction: column;
  gap: 7px;
`;

const CollHead = styled.div`
  height: 13px;
  display: flex;
  align-items: center;
`;

const CollName = styled.div`
  flex: 1;
  align-self: stretch;
  padding-left: 5px;
  display: flex;
  align-items: center;
  background: #1d1d1d;
  border-radius: 2px;
`;

const CollBtn = styled.div`
  width: 13px;
  margin-left: 6px;
  display: flex;
  justify-content: center;
`;

const Offset = styled.div`
  height: 13px;
  display: grid;
  grid-template-columns: repeat(3, 1fr);
  gap: 1px;
`;

const OffsetCell = styled.div`
  padding: 0 3px 0 11px;
  display: flex;
  align-items: center;
  justify-content: space-between;
  background: #545454;
`;

const InstanceRow = styled.div`
  height: 13px;
  margin: 3px 6px 0 5px;
  display: grid;
  grid-template-columns: repeat(3, 1fr);
  gap: 1px;
`;

const InstanceBtn = styled.div<{ $lit?: boolean }>`
  display: flex;
  align-items: center;
  justify-content: center;
  background: ${(p) => (p.$lit ? '#4772b3' : '#545454')};
  color: ${(p) => (p.$lit ? '#fff' : '#d0d0d0')};
`;

const LockedGroup = ({ rows, labels }: { rows: string[]; labels: string[] }) => (
  <Group>
    {rows.map((v, i) => (
      <Row key={labels[i]}>
        <Label>{labels[i]}</Label>
        <Value>{v}</Value>
        <Lock>
          <Icon name="lock" size={10} color="#b0b0b0" />
        </Lock>
        <Deco>
          <DecoDot />
        </Deco>
      </Row>
    ))}
  </Group>
);

const ObjectProps = () => (
  <Region $bg="#303030">
    <HeaderBar $h={19}>
      <Pill $w={19} $bg="transparent">
        <Icon name="editor" />
        <ChevD />
      </Pill>
      <SearchBox $w={78} $ml={98}>
        <Icon name="search" size={10} />
        Search
      </SearchBox>
      <HeaderSpacer />
      <Pill $w={13} $bg="#282828">
        <ChevD />
      </Pill>
    </HeaderBar>
    <PropBody>
      <PropertyTabs />
      <PropScroll>
        <Crumbs $pl={6} $h={22} $mb={8}>
          <Icon name="object" />
          <HeaderText $ml={3}>Cube</HeaderText>
          <CrumbEnd>
            <Icon name="pin" color="#888" />
          </CrumbEnd>
        </Crumbs>
        <ObjName>
          <Icon name="object" />
          <ChevD size={6} />
          <NameInput>Cube</NameInput>
        </ObjName>
        <PanelStack>
          <Panel $h={191}>
            <PanelHead $h={18}>
              <ChevD />
              Transform
              <PanelGrip>
                <Grip />
              </PanelGrip>
            </PanelHead>
            <PropRows $mt={4.5}>
              <LockedGroup labels={['Location X', 'Y', 'Z']} rows={['0 m', '0 m', '0 m']} />
              <LockedGroup labels={['Rotation X', 'Y', 'Z']} rows={['0°', '0°', '0°']} />
              <Group>
                <Row>
                  <Label>Mode</Label>
                  <Value $dark>
                    XYZ Euler
                    <ChevD />
                  </Value>
                  <Lock />
                  <Deco>
                    <DecoDot />
                  </Deco>
                </Row>
              </Group>
              <LockedGroup labels={['Scale X', 'Y', 'Z']} rows={['1.000', '1.000', '1.000']} />
            </PropRows>
            <DeltaRow>
              <ChevR />
              Delta Transform
            </DeltaRow>
          </Panel>
          <Panel $h={125}>
            <PanelHead $h={18}>
              <ChevD />
              Relations
              <PanelGrip>
                <Grip />
              </PanelGrip>
            </PanelHead>
            <PropRows $mt={4.5}>
              <Group $gap={2.3} $mb={6.3}>
                <Row>
                  <Label>Parent</Label>
                  <Value $dark>
                    <CheckRow>
                      <Icon name="object" />
                      <MutedText>Object</MutedText>
                    </CheckRow>
                    <Icon name="eyedrop" size={10} />
                  </Value>
                  <Deco />
                </Row>
                <Row $dim>
                  <Label>Parent Type</Label>
                  <Value $dark>
                    Object
                    <ChevD />
                  </Value>
                  <Deco>
                    <DecoDot />
                  </Deco>
                </Row>
                <Row $dim>
                  <Label />
                  <CheckRow>
                    <CheckBox />
                    Camera Parent Lock
                  </CheckRow>
                  <Deco>
                    <DecoDot />
                  </Deco>
                </Row>
              </Group>
              <Group $gap={2.3} $mb={7.3}>
                <Row>
                  <Label>Tracking Axis</Label>
                  <Value $dark>
                    +Y
                    <ChevD />
                  </Value>
                  <Deco>
                    <DecoDot />
                  </Deco>
                </Row>
                <Row>
                  <Label>Up Axis</Label>
                  <Value $dark>
                    Z
                    <ChevD />
                  </Value>
                  <Deco>
                    <DecoDot />
                  </Deco>
                </Row>
              </Group>
              <Group $mb={0}>
                <Row>
                  <Label>Pass Index</Label>
                  <Value>0</Value>
                  <Deco>
                    <DecoDot />
                  </Deco>
                </Row>
              </Group>
            </PropRows>
          </Panel>
          <Panel $h={85}>
            <PanelHead $h={18}>
              <ChevD />
              Collections
              <PanelGrip>
                <Grip />
              </PanelGrip>
            </PanelHead>
            <AddRow>
              <AddBtn>Add to Collection</AddBtn>
              <AddBtn $w={13}>
                <Icon name="plus" size={8} />
              </AddBtn>
            </AddRow>
            <CollBox>
              <CollHead>
                <CollName>a</CollName>
                <CollBtn>
                  <Icon name="cross" size={8} />
                </CollBtn>
                <CollBtn>
                  <ChevD />
                </CollBtn>
              </CollHead>
              <Offset>
                <OffsetCell>
                  <span>X</span>
                  <span>0 m</span>
                </OffsetCell>
                <OffsetCell>
                  <span>Y</span>
                  <span>0 m</span>
                </OffsetCell>
                <OffsetCell>
                  <span>Z</span>
                  <span>0 m</span>
                </OffsetCell>
              </Offset>
            </CollBox>
          </Panel>
          <Panel $h={40}>
            <PanelHead $h={18}>
              <ChevD />
              Instancing
              <PanelGrip>
                <Grip />
              </PanelGrip>
            </PanelHead>
            <InstanceRow>
              <InstanceBtn $lit>None</InstanceBtn>
              <InstanceBtn>Vertices</InstanceBtn>
              <InstanceBtn>Faces</InstanceBtn>
            </InstanceRow>
          </Panel>
        </PanelStack>
      </PropScroll>
    </PropBody>
  </Region>
);

/* ---------- status bar ---------- */

const StatusBar = styled.div`
  height: 15px;
  flex-shrink: 0;
  display: flex;
  align-items: center;
  padding: 0 10px 0 8px;
  color: #b4b4b4;
`;

const StatusItem = styled.div<{ $w: number }>`
  width: ${(p) => p.$w}px;
  display: flex;
  align-items: center;
  gap: 5px;
`;

const Version = styled.div`
  margin-left: auto;
  color: #9a9a9a;
`;

export default function App() {
  return (
    <Screen>
      <GlobalStyle />
      <TopBar>
        <Icon name="logo" size={13} />
        <MenuItem $active $ml={2}>File</MenuItem>
        <MenuItem>Edit</MenuItem>
        <MenuItem>Render</MenuItem>
        <MenuItem>Window</MenuItem>
        <MenuItem>Help</MenuItem>
        <Tabs>
          {['Layout', 'UV Edit', 'Material Edit', 'GeoNode Edit', 'Animation', 'Preview', 'PreviewVR'].map((t, i) => (
            <WsTab key={t} $active={i === 0}>
              {t}
            </WsTab>
          ))}
          <AddTab>
            <Icon name="plus" size={8} color="#9d9d9d" />
          </AddTab>
        </Tabs>
        <TopRight>
          <SceneBox $w={130}>
            <Icon name="scene" size={11} />
            <ChevD size={6} />
            <SceneName>Scene</SceneName>
            <SceneBtn>
              <Icon name="pin" size={10} color="#777" />
            </SceneBtn>
            <SceneBtn $lit>
              <Icon name="copy" size={10} />
            </SceneBtn>
            <SceneBtn>
              <Icon name="cross" size={7} color="#666" />
            </SceneBtn>
          </SceneBox>
          <SceneBox $w={127}>
            <Icon name="viewLayer" size={11} />
            <ChevD size={6} />
            <SceneName>View Layer</SceneName>
            <SceneBtn $lit>
              <Icon name="copy" size={10} />
            </SceneBtn>
            <SceneBtn>
              <Icon name="cross" size={7} color="#666" />
            </SceneBtn>
          </SceneBox>
        </TopRight>
      </TopBar>
      <Main>
        <LeftColumn>
          <Outliner />
          <MaterialProps />
          <ImageEditor />
        </LeftColumn>
        <Viewport />
        <RightColumn>
          <Preview />
          <ObjectProps />
        </RightColumn>
      </Main>
      <StatusBar>
        <StatusItem $w={154}>
          <Icon name="mouse" size={11} />
          Select
        </StatusItem>
        <StatusItem $w={152}>
          <Icon name="mouse" size={11} />
          Object
        </StatusItem>
        <StatusItem $w={200}>
          <Icon name="mouse" size={11} />
          View Navigation (Walk/Fly)
        </StatusItem>
        <Version>4.1.1</Version>
      </StatusBar>
    </Screen>
  );
}
